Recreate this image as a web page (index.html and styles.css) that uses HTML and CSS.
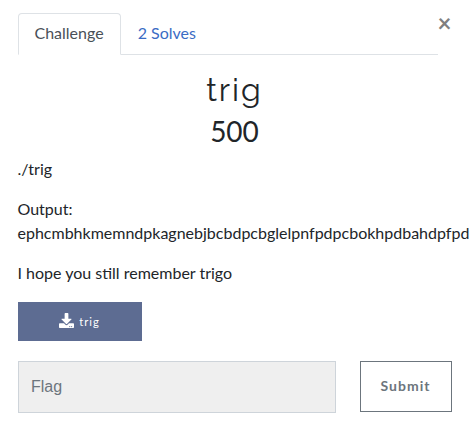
FILE: index.html
```html
<!DOCTYPE html>
<html lang="en">
<head>
<meta charset="utf-8">
<title>trig</title>
<link rel="stylesheet" href="styles.css">
</head>
<body>
<main class="modal">
  <header class="top">
    <nav class="tabs">
      <a class="tab active">Challenge</a>
      <a class="tab">2 Solves</a>
    </nav>
    <span class="close">×</span>
  </header>
  <h2 class="name">trig</h2>
  <h3 class="value">500</h3>
  <div class="desc">
    <p>./trig</p>
    <p>Output:<br>ephcmbhkmemndpkagnebjbcbdpcbglelpnfpdpcbokhpdbahdpfpd</p>
    <p>I hope you still remember trigo</p>
  </div>
  <a class="file">
    <svg class="icon" viewBox="0 0 512 512"><path fill="currentColor" d="M216 0h80c13.300 0 24 10.700 24 24v168h87.700c17.800 0 26.700 21.500 14.100 34.100L269.700 378.300c-7.500 7.500-19.800 7.500-27.300 0L90.100 226.100c-12.600-12.600-3.700-34.100 14.100-34.100H192V24c0-13.300 10.700-24 24-24zm296 376v112c0 13.300-10.700 24-24 24H24c-13.300 0-24-10.700-24-24V376c0-13.300 10.700-24 24-24h146.700l49 49c20.100 20.100 52.500 20.100 72.600 0l49-49H488c13.300 0 24 10.700 24 24zm-124 88c0-11-9-20-20-20s-20 9-20 20 9 20 20 20 20-9 20-20zm64 0c0-11-9-20-20-20s-20 9-20 20 9 20 20 20 20-9 20-20z"/></svg>
    <span>trig</span>
  </a>
  <form class="form">
    <input class="flag" type="text" placeholder="Flag">
    <button class="submit" type="button">Submit</button>
  </form>
</main>
</body>
</html>
```
FILE: styles.css
```css
* { box-sizing: border-box; }
body { margin: 0; overflow: hidden; background: #fff; color: #212529; font: 16px/24px Lato, sans-serif; }
.modal { width: 469px; height: 433px; padding: 13px 17.500px 0; overflow: hidden; }
.top { display: flex; height: 42px; }
.tabs { display: flex; width: 420px; border-bottom: 1px solid #dee2e6; }
.tab { height: 42px; padding: 7px 16px; border: 1px solid transparent; color: #3b6cc4; }
.tab.active { border-color: #dee2e6 #dee2e6 #fff; border-radius: 4px 4px 0 0; background: #fff; color: #495057; }
.close { font-size: 24px; font-weight: 700; line-height: 20px; color: #7f7f7f; }
.name, .value { margin: 0; text-align: center; }
.name { margin-top: 16px; font: 400 32px/38px Raleway, Lato, sans-serif; letter-spacing: 2px; }
.value { margin-top: 5px; font: 400 28px/34px Lato, sans-serif; }
.desc { margin-top: 9px; }
.desc p { margin: 0 0 16px; white-space: nowrap; }
.file { display: flex; align-items: center; justify-content: center; gap: 5px; width: 124px; height: 39px; margin-top: 17px; background: #5d6c92; color: #fff; font-size: 11.200px; letter-spacing: 1px; }
.icon { width: 15px; height: 15px; margin-top: -3px; }
.form { display: flex; gap: 24px; margin: 20px 0 0; }
.flag { width: 318px; height: 52px; padding: 0 12.500px; border: 1px solid #ced4da; border-radius: 0; background: #efefef; font: 16px "Liberation Sans", sans-serif; }
.flag::placeholder { color: #6c757d; opacity: 1; }
.submit { width: 92px; height: 51px; padding: 0 0 2px; border: 1px solid #6c757d; background: #fff; color: #6c757d; font: 700 14px Lato, sans-serif; letter-spacing: 1px; }
```
